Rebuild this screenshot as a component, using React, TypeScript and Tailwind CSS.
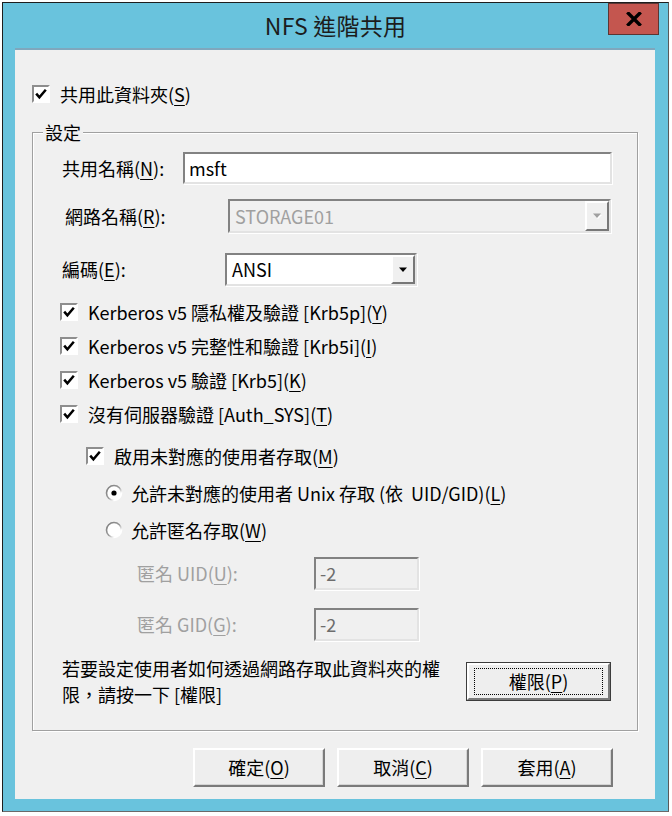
import React from "react";

function U({ c }: { c: string }) {
  return <span className="underline underline-offset-[3px] decoration-1">{c}</span>;
}

function Check() {
  return (
    <span className="relative flex items-center justify-center w-[18px] h-[18px] shrink-0 bg-white border-2 border-t-[#8e8e8e] border-l-[#8e8e8e] border-r-white border-b-white">
      <svg width="14" height="14" viewBox="0 0 14 14">
        <path d="M2.2 6.6 L5.4 10.4 L11.8 2.8" stroke="#000" strokeWidth="2.5" fill="none" strokeLinejoin="miter" />
      </svg>
    </span>
  );
}

function Radio({ on, id }: { on?: boolean; id: string }) {
  return (
    <svg width="18" height="18" viewBox="0 0 18 18" className="shrink-0">
      <defs>
        <linearGradient id={id} x1="0" y1="0" x2="1" y2="1">
          <stop offset="0" stopColor="#7c7c7c" />
          <stop offset="0.5" stopColor="#9a9a9a" />
          <stop offset="0.75" stopColor="#ffffff" />
          <stop offset="1" stopColor="#ffffff" />
        </linearGradient>
      </defs>
      <circle cx="9" cy="9" r="7.5" fill="#fff" stroke={`url(#${id})`} strokeWidth="1.6" />
      {on && <circle cx="9" cy="9" r="2.6" fill="#000" />}
    </svg>
  );
}

function Arrow({ disabled }: { disabled?: boolean }) {
  return (
    <svg width="10" height="6" viewBox="0 0 10 6">
      {disabled && <polygon points="2,2 10,2 6,6" fill="#fff" />}
      <polygon points="1,0.5 9,0.5 5,5" fill={disabled ? "#a0a0a0" : "#000"} />
    </svg>
  );
}

function DropBtn({ disabled }: { disabled?: boolean }) {
  return (
    <div className="flex items-center justify-center w-[24px] h-full bg-[#f0f0f0] border-2 border-t-white border-l-white border-r-[#777] border-b-[#777]">
      <Arrow disabled={disabled} />
    </div>
  );
}

function Sunken({ className, children }: { className: string; children?: React.ReactNode }) {
  return (
    <div
      className={
        "flex items-center border-2 border-t-[#828282] border-l-[#828282] border-r-[#e3e3e3] border-b-[#e3e3e3] shadow-[1px_1px_0_#ffffff] " +
        className
      }
    >
      {children}
    </div>
  );
}

function Btn({ children, w }: { children: React.ReactNode; w: string }) {
  return (
    <div
      className={
        "flex items-center justify-center h-[39px] bg-[#eeeeee] border-2 border-t-white border-l-white border-r-[#7a7a7a] border-b-[#7a7a7a] shadow-[inset_-1px_-1px_0_#d4d4d4] text-[18px] text-black " +
        w
      }
    >
      {children}
    </div>
  );
}

export default function App() {
  return (
    <div className="w-[672px] h-[816px] bg-white pl-[2px] pt-[2px] font-['Noto_Sans_CJK_TC','Noto_Sans',sans-serif] text-black">
      <div className="w-[667px] h-[810px] bg-[#69c3dd] border border-t-[#1e1e1e] border-l-[#1e1e1e] border-r-[#5a5a5a] border-b-[#6a6a6a] flex flex-col">
        {/* Title bar */}
        <div className="relative h-[45px] flex items-center justify-center">
          <span className="text-[23px] leading-none text-[#1c1c1c] tracking-[0.2px]">NFS 進階共用</span>
          <div className="absolute right-[9px] top-0 w-[51px] h-[32px] bg-[#c4564f] border border-[#5c3532] flex items-center justify-center">
            <svg width="16" height="14" viewBox="0 0 16 14">
              <path d="M2.5 1.5 L13.5 12.5 M13.5 1.5 L2.5 12.5" stroke="#000" strokeWidth="3.4" strokeLinecap="square" />
            </svg>
          </div>
        </div>

        {/* Content */}
        <div className="ml-[12px] w-[640px] h-[751px] bg-[#f0f0f0] border-t-2 border-[#7fa7bd] flex flex-col text-[18px]">
          <div className="mt-[35px] h-[18px] pl-[17px] flex items-center gap-[10px]">
            <Check />
            <span className="leading-none">
              共用此資料夾(<U c="S" />)
            </span>
          </div>

          {/* Group box */}
          <div className="relative mt-[29px] ml-[17px] w-[606px] h-[599px] border border-[#a0a0a0] shadow-[inset_1px_1px_0_#ffffff,1px_1px_0_#ffffff] flex flex-col">
            <span className="absolute left-[10px] -top-[13px] px-[2px] bg-[#f0f0f0] leading-[24px]">設定</span>

            <div className="mt-[19px] h-[32px] pl-[29px] flex items-center">
              <span className="w-[121px] shrink-0">
                共用名稱(<U c="N" />):
              </span>
              <Sunken className="w-[429px] h-[32px] bg-white pl-[4px]">msft</Sunken>
            </div>

            <div className="mt-[15px] h-[34px] pl-[32px] flex items-center">
              <span className="w-[163px] shrink-0">
                網路名稱(<U c="R" />):
              </span>
              <Sunken className="w-[383px] h-[34px] bg-[#f0f0f0] justify-between">
                <span className="pl-[5px] text-[#a0a0a0]">STORAGE01</span>
                <DropBtn disabled />
              </Sunken>
            </div>

            <div className="mt-[20px] h-[33px] pl-[29px] flex items-center">
              <span className="w-[163px] shrink-0">
                編碼(<U c="E" />):
              </span>
              <Sunken className="w-[192px] h-[33px] bg-white justify-between">
                <span className="pl-[5px]">ANSI</span>
                <DropBtn />
              </Sunken>
            </div>

            <div className="mt-[9px] h-[34px] pl-[27px] flex items-center gap-[10px]">
              <Check />
              <span>
                Kerberos v5 隱私權及驗證 [Krb5p](<U c="Y" />)
              </span>
            </div>
            <div className="h-[34px] pl-[27px] flex items-center gap-[10px]">
              <Check />
              <span>
                Kerberos v5 完整性和驗證 [Krb5i](<U c="I" />)
              </span>
            </div>
            <div className="h-[34px] pl-[27px] flex items-center gap-[10px]">
              <Check />
              <span>
                Kerberos v5 驗證 [Krb5](<U c="K" />)
              </span>
            </div>
            <div className="h-[34px] pl-[27px] flex items-center gap-[10px]">
              <Check />
              <span>
                沒有伺服器驗證 [Auth_SYS](<U c="T" />)
              </span>
            </div>

            <div className="mt-[8px] h-[34px] pl-[53px] flex items-center gap-[10px]">
              <Check />
              <span>
                啟用未對應的使用者存取(<U c="M" />)
              </span>
            </div>

            <div className="mt-[3px] h-[34px] pl-[72px] flex items-center gap-[8px]">
              <Radio on id="r1" />
              <span>
                允許未對應的使用者 Unix 存取 (依 &nbsp;UID/GID)(<U c="L" />)
              </span>
            </div>
            <div className="mt-[3px] h-[34px] pl-[72px] flex items-center gap-[8px]">
              <Radio id="r2" />
              <span>
                允許匿名存取(<U c="W" />)
              </span>
            </div>

            <div className="mt-[10px] h-[33px] pl-[104px] flex items-center">
              <span className="w-[177px] shrink-0 text-[#a0a0a0]">
                匿名 UID(<U c="U" />):
              </span>
              <Sunken className="w-[105px] h-[33px] bg-[#f0f0f0] pl-[4px] text-[#6d6d6d]">-2</Sunken>
            </div>
            <div className="mt-[18px] h-[33px] pl-[104px] flex items-center">
              <span className="w-[177px] shrink-0 text-[#a0a0a0]">
                匿名 GID(<U c="G" />):
              </span>
              <Sunken className="w-[105px] h-[33px] bg-[#f0f0f0] pl-[4px] text-[#6d6d6d]">-2</Sunken>
            </div>

            <div className="mt-[14px] pl-[29px] flex items-start">
              <p className="w-[404px] leading-[26px]">
                若要設定使用者如何透過網路存取此資料夾的權
                <br />
                限，請按一下 [權限]
              </p>
              <div className="mt-[7px] w-[145px] h-[39px] border border-[#3c3c3c] flex">
                <div className="flex-1 flex items-center justify-center bg-[#eeeeee] border-2 border-t-white border-l-white border-r-[#7a7a7a] border-b-[#7a7a7a]">
                  <div className="w-[129px] h-[27px] border border-dotted border-black flex items-center justify-center">
                    權限(<U c="P" />)
                  </div>
                </div>
              </div>
            </div>
          </div>

          {/* Bottom buttons */}
          <div className="mt-[17px] pr-[42px] flex justify-end gap-[12px]">
            <Btn w="w-[132px]">
              確定(<U c="O" />)
            </Btn>
            <Btn w="w-[132px]">
              取消(<U c="C" />)
            </Btn>
            <Btn w="w-[132px]">
              套用(<U c="A" />)
            </Btn>
          </div>
        </div>
      </div>
    </div>
  );
}
